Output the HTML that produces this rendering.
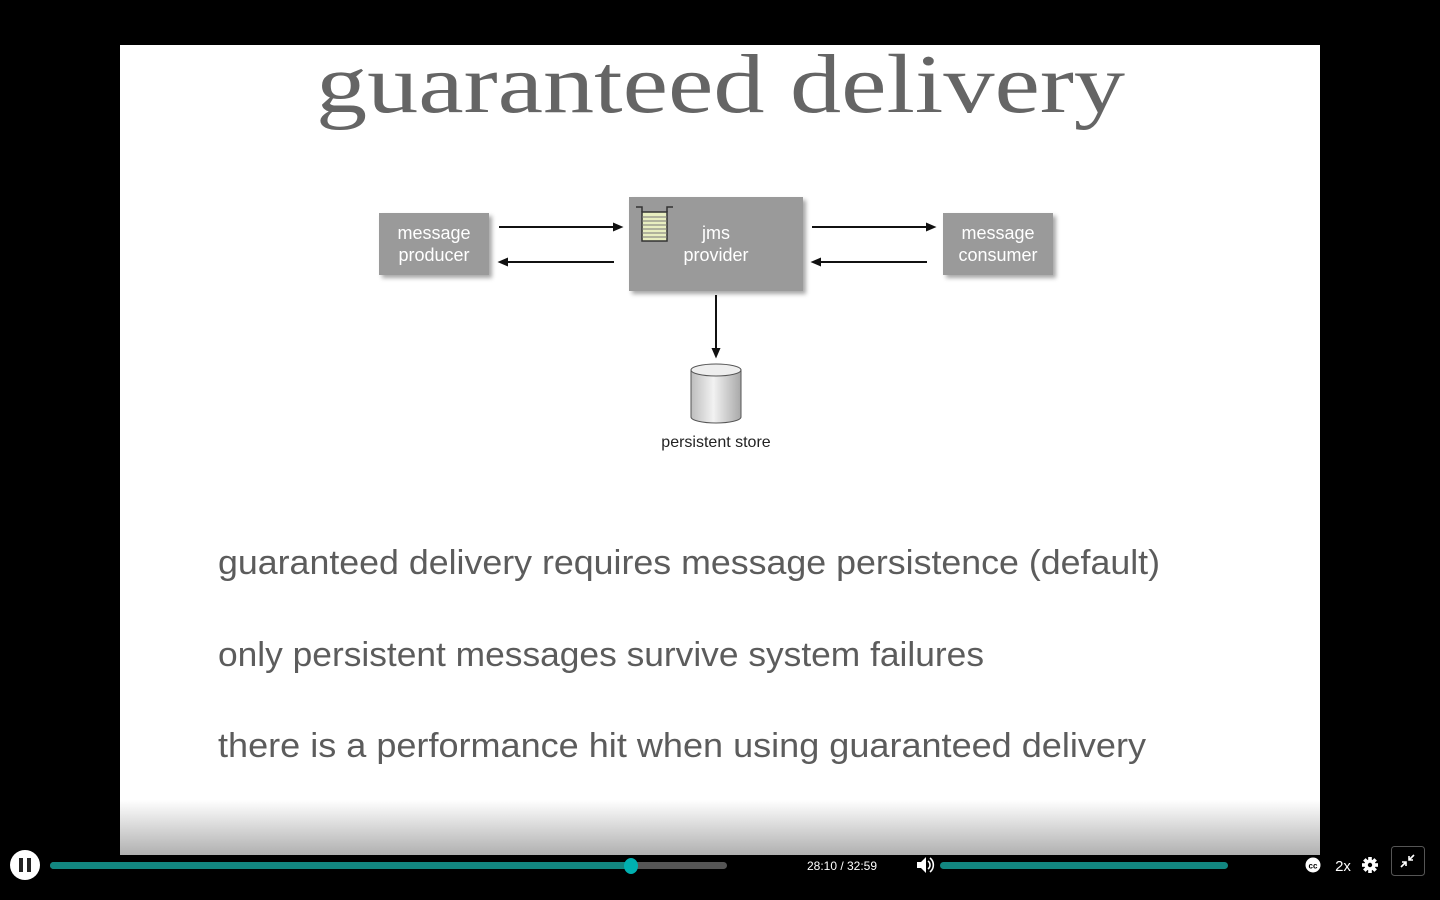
<!DOCTYPE html>
<html><head><meta charset="utf-8"><style>
html,body{margin:0;padding:0;background:#000;width:1440px;height:900px;overflow:hidden}
svg{display:block}
</style></head><body>
<svg width="1440" height="900" viewBox="0 0 1440 900" xmlns="http://www.w3.org/2000/svg">
<defs>
<linearGradient id="bot" x1="0" y1="0" x2="0" y2="1">
<stop offset="0" stop-color="#fff"/><stop offset="1" stop-color="#b0b0b0"/></linearGradient>
<linearGradient id="cyl" x1="0" y1="0" x2="1" y2="0">
<stop offset="0" stop-color="#bdbdbd"/><stop offset="0.45" stop-color="#f2f2f2"/><stop offset="1" stop-color="#a8a8a8"/></linearGradient>
<filter id="sh" x="-10%" y="-10%" width="130%" height="130%"><feDropShadow dx="3" dy="3" stdDeviation="2" flood-color="#000" flood-opacity="0.35"/></filter>
</defs>
<rect x="120" y="45" width="1200" height="810" fill="#fff"/>
<rect x="120" y="800" width="1200" height="55" fill="url(#bot)"/>
<text x="316" y="112" font-family="Liberation Serif, serif" font-size="84" fill="#656565" textLength="809" lengthAdjust="spacingAndGlyphs">guaranteed delivery</text>

<g font-family="Liberation Sans, sans-serif" font-size="18" fill="#fff" text-anchor="middle">
<rect x="379" y="213" width="110" height="62" fill="#9a9a9a" filter="url(#sh)"/>
<text x="434" y="239">message</text><text x="434" y="261">producer</text>
<rect x="629" y="197" width="174" height="94" fill="#9a9a9a" filter="url(#sh)"/>
<text x="716" y="239">jms</text><text x="716" y="261">provider</text>
<rect x="943" y="213" width="110" height="62" fill="#9a9a9a" filter="url(#sh)"/>
<text x="998" y="239">message</text><text x="998" y="261">consumer</text>
</g>
<rect x="642" y="212" width="25" height="29" fill="#e8eec0" stroke="#333" stroke-width="1.5"/>
<g stroke="#777" stroke-width="1"><line x1="642" y1="217" x2="667" y2="217"/><line x1="642" y1="221" x2="667" y2="221"/><line x1="642" y1="225" x2="667" y2="225"/><line x1="642" y1="229" x2="667" y2="229"/><line x1="642" y1="233" x2="667" y2="233"/><line x1="642" y1="237" x2="667" y2="237"/></g>
<path d="M636 207h6v5M673 207h-6v5" stroke="#333" stroke-width="1.5" fill="none"/>
<g stroke="#111" stroke-width="2" fill="#111">
<line x1="499" y1="227" x2="615" y2="227"/><path d="M621 227l-7-3v6z"/>
<line x1="614" y1="262" x2="506" y2="262"/><path d="M500 262l7-3v6z"/>
<line x1="812" y1="227" x2="928" y2="227"/><path d="M934 227l-7-3v6z"/>
<line x1="927" y1="262" x2="819" y2="262"/><path d="M813 262l7-3v6z"/>
<line x1="716" y1="295" x2="716" y2="350"/><path d="M716 356l-3-7h6z"/>
</g>
<path d="M691 370v47a25 6 0 0 0 50 0v-47z" fill="url(#cyl)" stroke="#555" stroke-width="1"/>
<ellipse cx="716" cy="370" rx="25" ry="6" fill="#eee" stroke="#555" stroke-width="1"/>
<text x="716" y="447" font-family="Liberation Sans, sans-serif" font-size="16" fill="#222" text-anchor="middle">persistent store</text>

<g font-family="Liberation Sans, sans-serif" font-size="34" fill="#5c5c5c">
<text x="218" y="574" textLength="942" lengthAdjust="spacingAndGlyphs">guaranteed delivery requires message persistence (default)</text>
<text x="218" y="666" textLength="766" lengthAdjust="spacingAndGlyphs">only persistent messages survive system failures</text>
<text x="218" y="757" textLength="928" lengthAdjust="spacingAndGlyphs">there is a performance hit when using guaranteed delivery</text>
</g>

<circle cx="25" cy="865" r="15" fill="#fff"/>
<rect x="19" y="858" width="4" height="14" fill="#222"/><rect x="27" y="858" width="4" height="14" fill="#222"/>
<rect x="50" y="862" width="677" height="7" rx="3.5" fill="#555"/>
<rect x="50" y="862" width="580" height="7" rx="3.5" fill="#128680"/>
<ellipse cx="631" cy="866" rx="7" ry="8" fill="#00b0b0"/>
<text x="842" y="870" font-family="Liberation Sans, sans-serif" font-size="12" fill="#fff" text-anchor="middle">28:10 / 32:59</text>
<path d="M917 862h4l5-5v16l-5-5h-4z" fill="#fff"/>
<path d="M928 861a5 5 0 0 1 0 8M930 858a9 9 0 0 1 0 14" stroke="#fff" stroke-width="1.6" fill="none"/>
<rect x="940" y="862" width="288" height="7" rx="3.5" fill="#128680"/>
<circle cx="1313" cy="865" r="7.5" fill="#fff"/>
<text x="1313" y="868.5" font-family="Liberation Sans, sans-serif" font-size="8" font-weight="bold" fill="#000" text-anchor="middle">cc</text>
<text x="1343" y="871" font-family="Liberation Sans, sans-serif" font-size="15" fill="#fff" text-anchor="middle">2x</text>
<g transform="translate(1370 865)" fill="#fff">
<circle r="5.5"/>
<rect x="-1.8" y="-8" width="3.6" height="16"/>
<rect x="-1.8" y="-8" width="3.6" height="16" transform="rotate(45)"/>
<rect x="-1.8" y="-8" width="3.6" height="16" transform="rotate(90)"/>
<rect x="-1.8" y="-8" width="3.6" height="16" transform="rotate(135)"/>
<circle r="2.2" fill="#000"/>
</g>
<rect x="1391.5" y="846.5" width="33" height="29" rx="3" fill="#000" stroke="#555"/>
<path d="M1401 867l5-5M1402 862h4v4M1414 855l-5 5M1413 860h-4v-4" stroke="#fff" stroke-width="1.6" fill="none"/>
</svg>
</body></html>
